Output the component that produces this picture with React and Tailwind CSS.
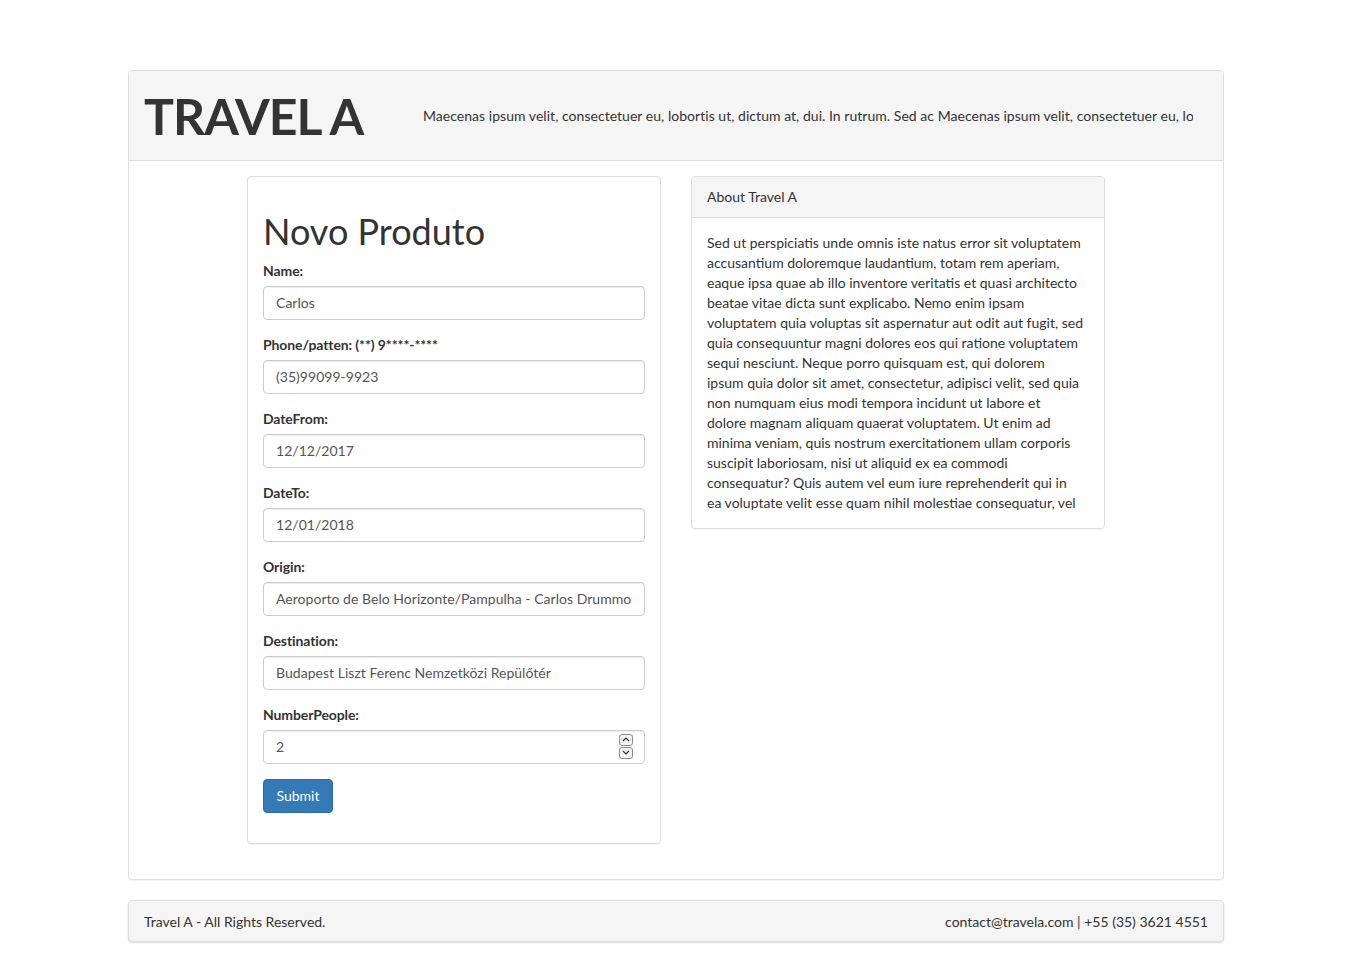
import React from "react";

const font = { fontFamily: "Lato, 'Noto Sans', sans-serif" };

const aboutLines = [
  "Sed ut perspiciatis unde omnis iste natus error sit voluptatem",
  "accusantium doloremque laudantium, totam rem aperiam,",
  "eaque ipsa quae ab illo inventore veritatis et quasi architecto",
  "beatae vitae dicta sunt explicabo. Nemo enim ipsam",
  "voluptatem quia voluptas sit aspernatur aut odit aut fugit, sed",
  "quia consequuntur magni dolores eos qui ratione voluptatem",
  "sequi nesciunt. Neque porro quisquam est, qui dolorem",
  "ipsum quia dolor sit amet, consectetur, adipisci velit, sed quia",
  "non numquam eius modi tempora incidunt ut labore et",
  "dolore magnam aliquam quaerat voluptatem. Ut enim ad",
  "minima veniam, quis nostrum exercitationem ullam corporis",
  "suscipit laboriosam, nisi ut aliquid ex ea commodi",
  "consequatur? Quis autem vel eum iure reprehenderit qui in",
  "ea voluptate velit esse quam nihil molestiae consequatur, vel",
];

function Field({ label, value, spinner }) {
  return (
    <div className="mb-[15px]">
      <label className="block font-bold text-[14px] leading-[20px] mb-[5px] text-[#333] tracking-[-0.1px]">{label}</label>
      <div className="relative">
        <input
          readOnly
          value={value}
          className="block w-full h-[34px] px-[12px] py-[6px] text-[14px] leading-[20px] text-[#555] bg-white border border-[#ccc] rounded-[4px] shadow-[inset_0_1px_1px_rgba(0,0,0,0.075)] outline-none tracking-[0.03px]"
          style={font}
        />
        {spinner && (
          <div className="absolute right-[12px] top-[4px] w-[14px] h-[25px] flex flex-col">
            <div className="h-[12px] border border-[#8a8a8a] rounded-[3px] bg-[#f3f3f3] flex items-center justify-center">
              <svg width="8" height="5" viewBox="0 0 8 5"><path d="M1 4 L4 1 L7 4" fill="none" stroke="#333" strokeWidth="1.2" /></svg>
            </div>
            <div className="h-[12px] mt-[1px] border border-[#8a8a8a] rounded-[3px] bg-[#f3f3f3] flex items-center justify-center">
              <svg width="8" height="5" viewBox="0 0 8 5"><path d="M1 1 L4 4 L7 1" fill="none" stroke="#333" strokeWidth="1.2" /></svg>
            </div>
          </div>
        )}
      </div>
    </div>
  );
}

export default function App() {
  return (
    <div className="min-h-screen bg-white text-[#333] text-[14px] leading-[20px]" style={font}>
      <div className="w-[1096px] mx-auto pt-[70px]">
        <div className="border border-[#ddd] rounded-[4px] mb-[20px] bg-white shadow-[0_1px_1px_rgba(0,0,0,0.05)]">
          <div className="h-[90px] bg-[#f5f5f5] border-b border-[#ddd] rounded-t-[3px] flex items-center px-[15px]">
            <div className="w-[279px] shrink-0 text-[50px] font-bold leading-none text-[#333] tracking-[-1px]">TRAVEL A</div>
            <div className="w-[770px] overflow-hidden whitespace-nowrap text-[14px] tracking-[0.035px]">
              Maecenas ipsum velit, consectetuer eu, lobortis ut, dictum at, dui. In rutrum. Sed ac Maecenas ipsum velit, consectetuer eu, lobortis ut, dictum at, dui.
            </div>
          </div>
          <div className="p-[15px] flex justify-center gap-[30px]">
            <div className="w-[414px] border border-[#ddd] rounded-[4px] mb-[20px] shadow-[0_1px_1px_rgba(0,0,0,0.05)] self-start">
              <div className="p-[15px] pb-0">
                <h1 className="text-[36px] leading-[1.1] mt-[20px] mb-[9px] font-normal text-[#333]">Novo Produto</h1>
                <Field label="Name:" value="Carlos" />
                <Field label="Phone/patten: (**) 9****-****" value="(35)99099-9923" />
                <Field label="DateFrom:" value="12/12/2017" />
                <Field label="DateTo:" value="12/01/2018" />
                <Field label="Origin:" value="Aeroporto de Belo Horizonte/Pampulha - Carlos Drummond de Andrade" />
                <Field label="Destination:" value="Budapest Liszt Ferenc Nemzetközi Repülőtér" />
                <Field label="NumberPeople:" value="2" spinner />
                <div className="mb-[15px] pb-[15px]">
                  <button className="h-[34px] w-[70px] text-[14px] text-white bg-[#337ab7] border border-[#2e6da4] rounded-[4px]" style={font}>Submit</button>
                </div>
              </div>
            </div>
            <div className="w-[414px] border border-[#ddd] rounded-[4px] self-start shadow-[0_1px_1px_rgba(0,0,0,0.05)]">
              <div className="px-[15px] py-[10px] bg-[#f5f5f5] border-b border-[#ddd] rounded-t-[3px]">About Travel A</div>
              <div className="p-[15px]">
                {aboutLines.map((l, i) => (
                  <span key={i} className="block whitespace-nowrap">{l}</span>
                ))}
              </div>
            </div>
          </div>
        </div>
        <div className="border border-[#ddd] rounded-[4px] bg-[#f5f5f5] px-[15px] pt-[11px] pb-[9px] flex justify-between shadow-[0_1px_2px_rgba(0,0,0,0.15)]">
          <span>Travel A - All Rights Reserved.</span>
          <span>contact@travela.com | +55 (35) 3621 4551</span>
        </div>
      </div>
    </div>
  );
}
